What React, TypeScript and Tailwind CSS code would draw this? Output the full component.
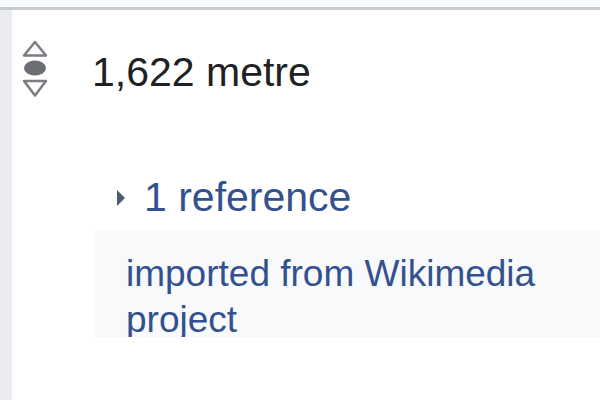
import { memo } from "react";

function RankIcon() {
    return (
        <svg width="26" height="60" viewBox="0 0 26 60" className="shrink-0">
            <polygon points="13,2 24,15.5 2,15.5" fill="none" stroke="#7a7e83" strokeWidth="2.5" strokeLinejoin="round" />
            <ellipse cx="13" cy="28" rx="11" ry="7.5" fill="#6b6f74" />
            <polygon points="2,41 24,41 13,55.5" fill="none" stroke="#7a7e83" strokeWidth="2.5" strokeLinejoin="round" />
        </svg>
    );
}

function App() {
    return (
        <div className="w-[600px] h-[400px] overflow-hidden bg-white font-['Liberation_Sans',Arial,sans-serif]">
            {/* top edge */}
            <div className="h-[7px] bg-[#f8f9fa]" />
            <div className="h-[3px] bg-[#c8ccd1]" />

            <div className="flex h-[390px]">
                {/* left strip */}
                <div className="w-[12px] shrink-0 bg-[#eaecf0]" />

                <div className="flex-1 min-w-0">
                    {/* statement value */}
                    <div className="flex items-start pl-[10px] mt-[30px]">
                        <RankIcon />
                        <div className="ml-[44px] mt-[8px] text-[41px] leading-[48px] text-[#202122]">
                            1,622 metre
                        </div>
                    </div>

                    {/* references toggle */}
                    <div className="flex items-center ml-[105px] mt-[74px] h-[46px] text-[41px] leading-[46px] text-[#34518f]">
                        <svg width="8" height="16" viewBox="0 0 8 16" className="mt-[2px] shrink-0">
                            <polygon points="0,0 8,8 0,16" fill="#4b5a6e" />
                        </svg>
                        <span className="ml-[19px]">1 reference</span>
                    </div>

                    {/* reference box */}
                    <div className="ml-[83px] mt-[10px] h-[107px] overflow-hidden bg-[#f8f9fb] pl-[31px] pt-[21px] text-[37px] leading-[46px] text-[#34518f]">
                        imported from Wikimedia project
                    </div>
                </div>
            </div>
        </div>
    );
}

export default memo(App);
